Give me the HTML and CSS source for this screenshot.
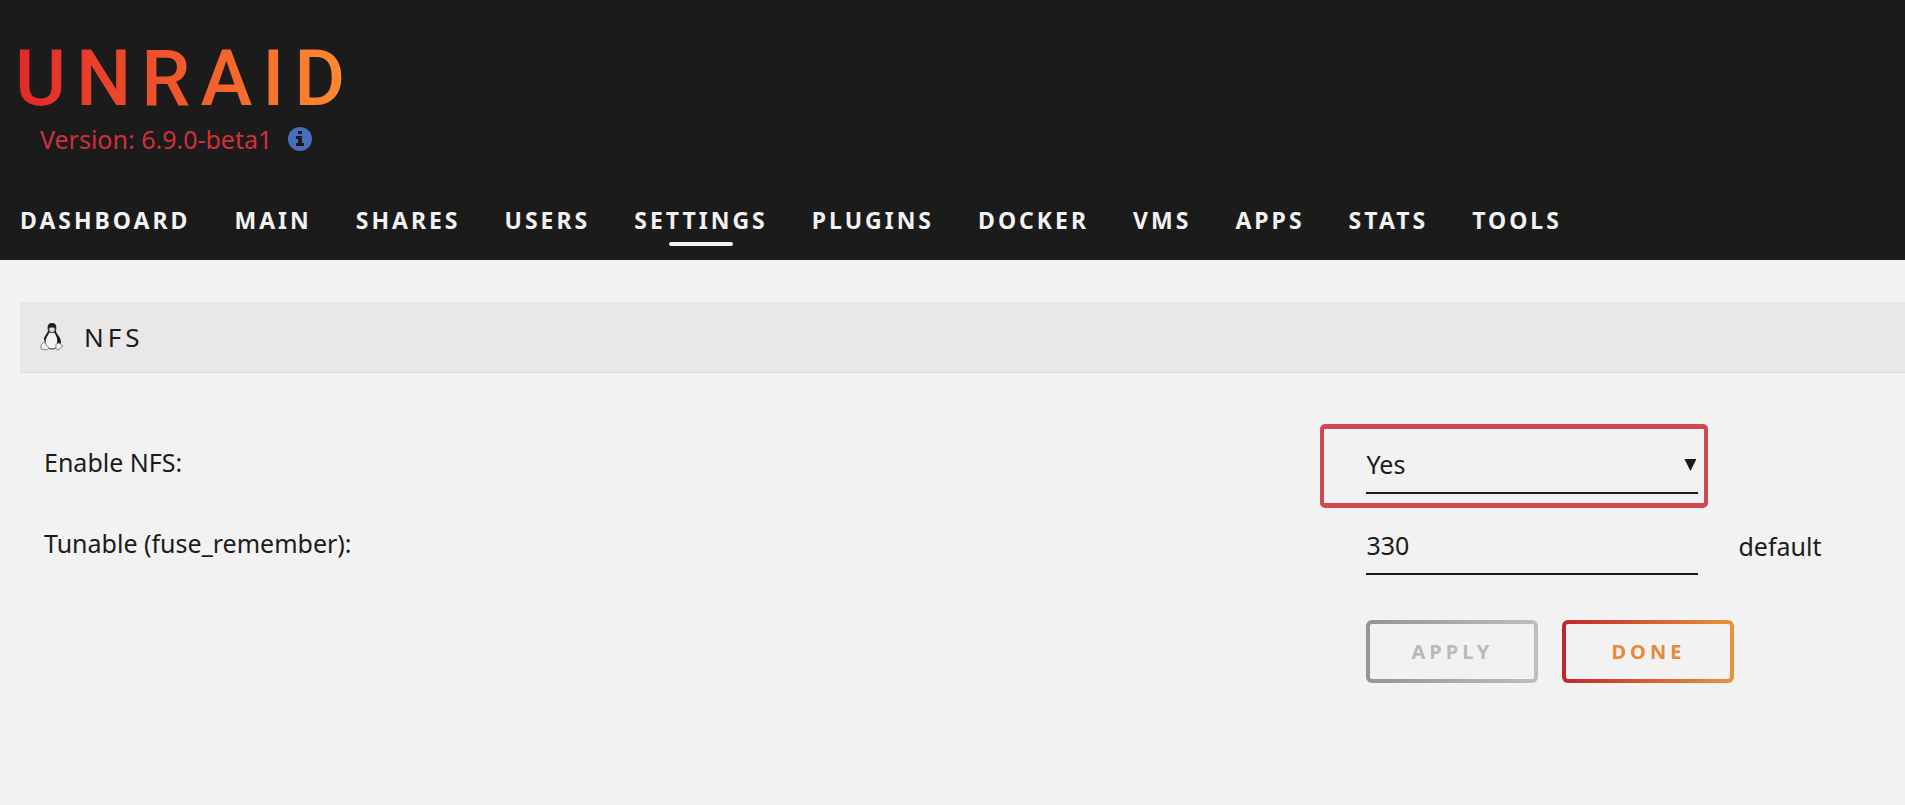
FILE: index.html
```
<!DOCTYPE html>
<html lang="en">
<head>
    <meta charset="UTF-8">
    <title>NFS</title>
    <link rel="stylesheet" href="styles.css">
</head>
<body>
    <header class="header">
        <div class="brand">
            <a class="logo" href="#">UNRAID</a>
            <div class="version">
                <span>Version: 6.9.0-beta1</span>
                <a class="info" href="#" aria-label="Release notes">
                    <svg viewBox="0 0 24 24" width="24" height="24">
                        <circle cx="12" cy="12" r="12" fill="#486dba"/>
                        <path d="M10 4h4v3h-4z M8 9h6v7h2v3H8v-3h2v-4H8z" fill="#1c1b1b"/>
                    </svg>
                </a>
            </div>
        </div>
        <nav class="menu">
            <a href="#">DASHBOARD</a>
            <a href="#">MAIN</a>
            <a href="#">SHARES</a>
            <a href="#">USERS</a>
            <a class="active" href="#">SETTINGS</a>
            <a href="#">PLUGINS</a>
            <a href="#">DOCKER</a>
            <a href="#">VMS</a>
            <a href="#">APPS</a>
            <a href="#">STATS</a>
            <a href="#">TOOLS</a>
        </nav>
    </header>

    <main class="content">
        <h1 class="title">
            <svg viewBox="0 0 24 28" width="24" height="28">
                <path d="M9 9C8 12 5 15 5 19c0 4 3 7 7 7s7-3 7-7c0-4-3-7-4-10z" fill="#f4f4f4" stroke="#1c1b1b"/>
                <path d="M8 8C7 3 8 0 12 0s5 3 4 8c0 3 5 6 5 11 0 2-1 3-2 3l-2-2c1-4-1-8-3-11l-2 1-3-1c-1 3-4 6-4 9l-1-1c0-4 3-6 4-9z" fill="#1c1b1b"/>
                <path d="M9 5l3-1 3 1v3l-3 2-3-2z" fill="#ddd" stroke="#555"/>
                <path d="M1 22l3-3 5 6-2 2-6-1zM23 23l-4-3-3 1v5l2 1z" fill="#f4f4f4" stroke="#888"/>
            </svg>
            <span>NFS</span>
        </h1>

        <form class="settings">
            <label for="enable-nfs">Enable NFS:</label>
            <div class="field">
                <div class="select highlight">
                    <select id="enable-nfs">
                        <option>No</option>
                        <option selected>Yes</option>
                    </select>
                </div>
            </div>

            <label for="fuse-remember">Tunable (fuse_remember):</label>
            <div class="field">
                <input type="text" id="fuse-remember" value="330">
                <span>default</span>
            </div>

            <div class="buttons">
                <button type="submit" disabled>APPLY</button>
                <button type="button">DONE</button>
            </div>
        </form>
    </main>
</body>
</html>
```

FILE: styles.css
```
* {
    box-sizing: border-box;
}
body {
    margin: 0;
    background-color: #f2f2f2;
    color: #1c1b1b;
    font-family: "Noto Sans", sans-serif;
    font-size: 25px;
    line-height: 32px;
}
a {
    text-decoration: none;
}

/* Header */
.header {
    padding: 39px 0 12px 20px;
    background-color: #1c1b1b;
}
.brand {
    width: max-content;
}
.logo {
    display: block;
    font-family: Roboto, sans-serif;
    font-weight: 500;
    font-size: 78px;
    line-height: 80px;
    letter-spacing: 10px;
    margin-left: -5px;
    background: linear-gradient(90deg, #e22828, #ff8c2f);
    background-clip: text;
    -webkit-background-clip: text;
    color: transparent;
}
.version {
    display: flex;
    align-items: center;
    gap: 16px;
    padding-left: 20px;
    margin-top: 4px;
    color: #cf3138;
}
.info {
    display: flex;
}
.menu {
    display: flex;
    flex-wrap: wrap;
    column-gap: 44px;
    margin-top: 49px;
}
.menu a {
    display: flex;
    flex-direction: column;
    align-items: center;
    height: 44px;
    color: #f2f2f2;
    font-size: 23px;
    font-weight: bold;
    letter-spacing: 3px;
}
.menu .active::after {
    content: "";
    width: 64px;
    height: 4px;
    margin-top: 6px;
    border-radius: 2px;
    background-color: #f2f2f2;
}

/* Page */
.content {
    padding: 42px 0 40px 20px;
}
.title {
    display: flex;
    align-items: center;
    gap: 20px;
    height: 71px;
    margin: 0 0 53px;
    padding: 0 20px;
    background-color: #e8e8e8;
    border-bottom: 1px solid #dedede;
    font-size: 26px;
    font-weight: normal;
    letter-spacing: 4px;
}
.settings {
    display: grid;
    grid-template-columns: 5fr 2fr;
    row-gap: 13px;
}
.settings label {
    padding: 20px 24px 0;
}
.field {
    display: flex;
    align-items: center;
    gap: 40px;
    height: 68px;
    padding-top: 10px;
}
.select {
    position: relative;
}
.select::after {
    content: "";
    position: absolute;
    top: 23px;
    right: 2px;
    width: 12px;
    height: 12px;
    background-color: #1c1b1b;
    clip-path: polygon(0 0, 100% 0, 50% 100%);
    pointer-events: none;
}
.highlight::before {
    content: "";
    position: absolute;
    top: -12px;
    right: -10px;
    bottom: -14px;
    left: -46px;
    border: 5px solid #cf4950;
    border-width: 5px 4px;
    border-radius: 5px;
    pointer-events: none;
}
select,
input {
    display: block;
    width: 332px;
    height: 58px;
    padding: 0;
    border: none;
    border-bottom: 2px solid #1c1b1b;
    border-radius: 0;
    outline: none;
    appearance: none;
    background: transparent;
    color: inherit;
    font: inherit;
}
.buttons {
    grid-column: 2;
    display: flex;
    gap: 24px;
    margin-top: 32px;
}
button {
    width: 172px;
    height: 63px;
    border: 4px solid transparent;
    border-radius: 6px;
    background: linear-gradient(#f2f2f2, #f2f2f2) padding-box, linear-gradient(90deg, #c0262c, #e8943a) border-box;
    color: #e8883a;
    font-family: inherit;
    font-size: 20px;
    font-weight: bold;
    letter-spacing: 4px;
    cursor: pointer;
}
button:disabled {
    background: linear-gradient(#f2f2f2, #f2f2f2) padding-box, linear-gradient(90deg, #949494, #bebebe) border-box;
    color: #b9b9b9;
    cursor: default;
}
```
